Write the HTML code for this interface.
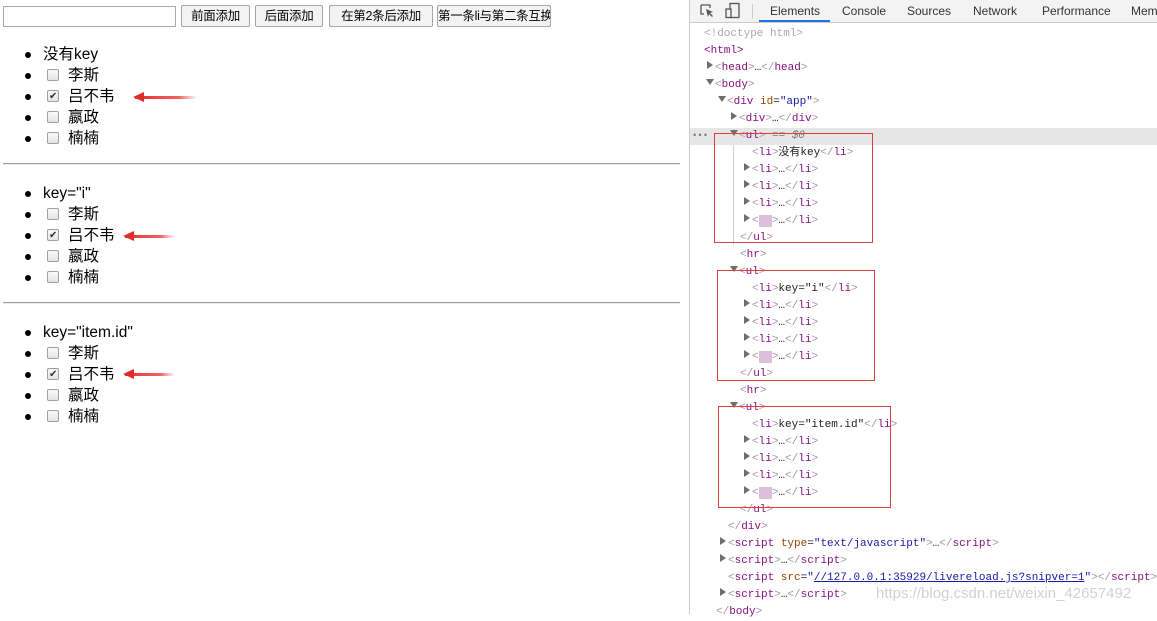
<!DOCTYPE html>
<html><head><meta charset="utf-8"><style>
*{margin:0;padding:0;box-sizing:border-box}
body{width:1157px;height:614px;overflow:hidden;background:#fff;position:relative;font-family:"Liberation Sans","Noto Sans CJK SC",sans-serif;color:#000}
.a{position:absolute}
.inp{left:3px;top:6px;width:173px;height:21px;border:1px solid #a9a9a9;background:#fff}
.btn{top:5px;height:22px;border:1px solid #a6a6a6;background:#f3f3f3;font-size:12.5px;line-height:20px;text-align:center;border-radius:2px;white-space:nowrap;overflow:hidden;letter-spacing:-0.3px}
.li{left:0;height:21px;font-size:15.5px;line-height:21px;white-space:nowrap}
.li .b{position:absolute;left:25px;top:8px;width:6px;height:6px;border-radius:50%;background:#000}
.li .t{position:absolute;left:43px;top:0}
.li .c{position:absolute;left:47px;top:4px;width:12px;height:12px;border:1px solid #a0a0a0;border-radius:2px;background:linear-gradient(#fafafa,#e4e4e4)}
.li .c.k::after{content:"✔";position:absolute;left:1px;top:-5px;font-size:10px;color:#333}
.li .t2{position:absolute;left:68px;top:0}
.hr{left:3px;width:677px;height:2px;border-top:1px solid #9a9a9a;border-bottom:1px solid #eee}
.arr{height:3px;background:linear-gradient(90deg,#e83030,#f06060 70%,rgba(240,100,100,0));}
.arr::before{content:"";position:absolute;left:-2px;top:-4px;border-right:11px solid #e52a2a;border-top:5.5px solid transparent;border-bottom:5.5px solid transparent}
.dt{left:689px;top:0;width:468px;height:614px;border-left:1px solid #ccc;background:#fff}
.tb{left:689px;top:0;width:468px;height:23px;background:#f3f3f3;border-bottom:1px solid #ccc;border-left:1px solid #ccc}
.tab{top:0;font-size:12px;line-height:22px;color:#333}
.ln{height:17px;line-height:17px;font-family:"Liberation Mono","DejaVu Sans Mono",monospace;font-size:11px;white-space:nowrap;color:#222;margin-top:1px}
.g{color:#a894a6}.p{color:#881280}.o{color:#994500}.v{color:#1a1aa6}.gr{color:#aaa}
.tri{position:absolute;width:0;height:0;margin-top:-3px}
.tr{border-left:6px solid #6e6e6e;border-top:4px solid transparent;border-bottom:4px solid transparent}
.td{border-top:6px solid #6e6e6e;border-left:4px solid transparent;border-right:4px solid transparent}
.box{border:1px solid #e23c3c}
.hl{background:#ddbfdd;color:#ddbfdd}
</style></head><body>
<div class="a inp"></div>
<div class="a btn" style="left:181px;width:69px">前面添加</div>
<div class="a btn" style="left:255px;width:68px">后面添加</div>
<div class="a btn" style="left:329px;width:104px">在第2条后添加</div>
<div class="a btn" style="left:437px;width:114px">第一条li与第二条互换</div>

<div class="a li" style="top:44px"><span class="b"></span><span class="t">没有key</span></div>
<div class="a li" style="top:65px"><span class="b"></span><span class="c"></span><span class="t2">李斯</span></div>
<div class="a li" style="top:86px"><span class="b"></span><span class="c k"></span><span class="t2">吕不韦</span></div>
<div class="a li" style="top:107px"><span class="b"></span><span class="c"></span><span class="t2">嬴政</span></div>
<div class="a li" style="top:128px"><span class="b"></span><span class="c"></span><span class="t2">楠楠</span></div>
<div class="a hr" style="top:163px"></div>
<div class="a li" style="top:183px"><span class="b"></span><span class="t">key="i"</span></div>
<div class="a li" style="top:204px"><span class="b"></span><span class="c"></span><span class="t2">李斯</span></div>
<div class="a li" style="top:225px"><span class="b"></span><span class="c k"></span><span class="t2">吕不韦</span></div>
<div class="a li" style="top:246px"><span class="b"></span><span class="c"></span><span class="t2">嬴政</span></div>
<div class="a li" style="top:267px"><span class="b"></span><span class="c"></span><span class="t2">楠楠</span></div>
<div class="a hr" style="top:302px"></div>
<div class="a li" style="top:322px"><span class="b"></span><span class="t">key="item.id"</span></div>
<div class="a li" style="top:343px"><span class="b"></span><span class="c"></span><span class="t2">李斯</span></div>
<div class="a li" style="top:364px"><span class="b"></span><span class="c k"></span><span class="t2">吕不韦</span></div>
<div class="a li" style="top:385px"><span class="b"></span><span class="c"></span><span class="t2">嬴政</span></div>
<div class="a li" style="top:406px"><span class="b"></span><span class="c"></span><span class="t2">楠楠</span></div>
<div class="a arr" style="left:135px;top:96px;width:62px"></div>
<div class="a arr" style="left:125px;top:235px;width:50px"></div>
<div class="a arr" style="left:125px;top:373px;width:50px"></div>

<div class="a dt"></div>
<div class="a tb"></div>
<svg class="a" style="left:699px;top:3px" width="16" height="16" viewBox="0 0 16 16"><path d="M2 2h9v3M2 2v9h3" fill="none" stroke="#555" stroke-width="1.3"/><path d="M7 6l7 3-3 1 3 3-1 1-3-3-1 3z" fill="#555"/></svg>
<svg class="a" style="left:724px;top:2px" width="18" height="18" viewBox="0 0 18 18"><rect x="6" y="1.5" width="9" height="14" fill="none" stroke="#555" stroke-width="1.3"/><rect x="2" y="7" width="5" height="8.5" fill="#f3f3f3" stroke="#555" stroke-width="1.3"/></svg>
<div class="a" style="left:752px;top:4px;width:1px;height:15px;background:#ccc"></div>
<div class="a tab" style="left:770px;color:#333">Elements</div>
<div class="a" style="left:759px;top:20px;width:71px;height:2px;background:#1a73e8"></div>
<div class="a tab" style="left:842px">Console</div>
<div class="a tab" style="left:907px">Sources</div>
<div class="a tab" style="left:973px">Network</div>
<div class="a tab" style="left:1042px">Performance</div>
<div class="a tab" style="left:1131px">Mem</div>

<div class="a" style="left:690px;top:128px;width:467px;height:17px;background:#e6e6e6"></div>
<div class="a ln" style="left:692px;top:127px;color:#777;font-size:9px">•••</div>
<div class="a" style="left:733px;top:145px;width:1px;height:100px;background:#c8d0e0"></div>

<div class="a ln gr" style="left:704px;top:25px">&lt;!doctype html&gt;</div>
<div class="a ln" style="left:704px;top:42px"><span class="p">&lt;html&gt;</span></div>
<div class="a tri tr" style="left:707px;top:64px"></div><div class="a ln" style="left:715px;top:59px"><span class="g">&lt;</span><span class="p">head</span><span class="g">&gt;</span>…<span class="g">&lt;/</span><span class="p">head</span><span class="g">&gt;</span></div>
<div class="a tri td" style="left:706px;top:82px"></div><div class="a ln" style="left:715px;top:76px"><span class="g">&lt;</span><span class="p">body</span><span class="g">&gt;</span></div>
<div class="a tri td" style="left:718px;top:99px"></div><div class="a ln" style="left:727px;top:93px"><span class="g">&lt;</span><span class="p">div </span><span class="o">id</span>=<span class="v">"app"</span><span class="g">&gt;</span></div>
<div class="a tri tr" style="left:731px;top:115px"></div><div class="a ln" style="left:739px;top:110px"><span class="g">&lt;</span><span class="p">div</span><span class="g">&gt;</span>…<span class="g">&lt;/</span><span class="p">div</span><span class="g">&gt;</span></div>
<div class="a tri td" style="left:730px;top:133px"></div><div class="a ln" style="left:739px;top:127px"><span class="g">&lt;</span><span class="p">ul</span><span class="g">&gt;</span> <span style="color:#777;font-style:italic">== $0</span></div>
<div class="a ln" style="left:752px;top:144px"><span class="g">&lt;</span><span class="p">li</span><span class="g">&gt;</span>没有key<span class="g">&lt;/</span><span class="p">li</span><span class="g">&gt;</span></div>
<div class="a tri tr" style="left:744px;top:166px"></div><div class="a ln" style="left:752px;top:161px"><span class="g">&lt;</span><span class="p">li</span><span class="g">&gt;</span>…<span class="g">&lt;/</span><span class="p">li</span><span class="g">&gt;</span></div>
<div class="a tri tr" style="left:744px;top:183px"></div><div class="a ln" style="left:752px;top:178px"><span class="g">&lt;</span><span class="p">li</span><span class="g">&gt;</span>…<span class="g">&lt;/</span><span class="p">li</span><span class="g">&gt;</span></div>
<div class="a tri tr" style="left:744px;top:200px"></div><div class="a ln" style="left:752px;top:195px"><span class="g">&lt;</span><span class="p">li</span><span class="g">&gt;</span>…<span class="g">&lt;/</span><span class="p">li</span><span class="g">&gt;</span></div>
<div class="a tri tr" style="left:744px;top:217px"></div><div class="a ln" style="left:752px;top:212px"><span class="g">&lt;</span><span class="hl">li</span><span class="g">&gt;</span>…<span class="g">&lt;/</span><span class="p">li</span><span class="g">&gt;</span></div>
<div class="a ln" style="left:740px;top:229px"><span class="g">&lt;/</span><span class="p">ul</span><span class="g">&gt;</span></div>
<div class="a ln" style="left:740px;top:246px"><span class="g">&lt;</span><span class="p">hr</span><span class="g">&gt;</span></div>
<div class="a tri td" style="left:730px;top:269px"></div><div class="a ln" style="left:739px;top:263px"><span class="g">&lt;</span><span class="p">ul</span><span class="g">&gt;</span></div>
<div class="a ln" style="left:752px;top:280px"><span class="g">&lt;</span><span class="p">li</span><span class="g">&gt;</span>key="i"<span class="g">&lt;/</span><span class="p">li</span><span class="g">&gt;</span></div>
<div class="a tri tr" style="left:744px;top:302px"></div><div class="a ln" style="left:752px;top:297px"><span class="g">&lt;</span><span class="p">li</span><span class="g">&gt;</span>…<span class="g">&lt;/</span><span class="p">li</span><span class="g">&gt;</span></div>
<div class="a tri tr" style="left:744px;top:319px"></div><div class="a ln" style="left:752px;top:314px"><span class="g">&lt;</span><span class="p">li</span><span class="g">&gt;</span>…<span class="g">&lt;/</span><span class="p">li</span><span class="g">&gt;</span></div>
<div class="a tri tr" style="left:744px;top:336px"></div><div class="a ln" style="left:752px;top:331px"><span class="g">&lt;</span><span class="p">li</span><span class="g">&gt;</span>…<span class="g">&lt;/</span><span class="p">li</span><span class="g">&gt;</span></div>
<div class="a tri tr" style="left:744px;top:353px"></div><div class="a ln" style="left:752px;top:348px"><span class="g">&lt;</span><span class="hl">li</span><span class="g">&gt;</span>…<span class="g">&lt;/</span><span class="p">li</span><span class="g">&gt;</span></div>
<div class="a ln" style="left:740px;top:365px"><span class="g">&lt;/</span><span class="p">ul</span><span class="g">&gt;</span></div>
<div class="a ln" style="left:740px;top:382px"><span class="g">&lt;</span><span class="p">hr</span><span class="g">&gt;</span></div>
<div class="a tri td" style="left:730px;top:405px"></div><div class="a ln" style="left:739px;top:399px"><span class="g">&lt;</span><span class="p">ul</span><span class="g">&gt;</span></div>
<div class="a ln" style="left:752px;top:416px"><span class="g">&lt;</span><span class="p">li</span><span class="g">&gt;</span>key="item.id"<span class="g">&lt;/</span><span class="p">li</span><span class="g">&gt;</span></div>
<div class="a tri tr" style="left:744px;top:438px"></div><div class="a ln" style="left:752px;top:433px"><span class="g">&lt;</span><span class="p">li</span><span class="g">&gt;</span>…<span class="g">&lt;/</span><span class="p">li</span><span class="g">&gt;</span></div>
<div class="a tri tr" style="left:744px;top:455px"></div><div class="a ln" style="left:752px;top:450px"><span class="g">&lt;</span><span class="p">li</span><span class="g">&gt;</span>…<span class="g">&lt;/</span><span class="p">li</span><span class="g">&gt;</span></div>
<div class="a tri tr" style="left:744px;top:472px"></div><div class="a ln" style="left:752px;top:467px"><span class="g">&lt;</span><span class="p">li</span><span class="g">&gt;</span>…<span class="g">&lt;/</span><span class="p">li</span><span class="g">&gt;</span></div>
<div class="a tri tr" style="left:744px;top:489px"></div><div class="a ln" style="left:752px;top:484px"><span class="g">&lt;</span><span class="hl">li</span><span class="g">&gt;</span>…<span class="g">&lt;/</span><span class="p">li</span><span class="g">&gt;</span></div>
<div class="a ln" style="left:740px;top:501px"><span class="g">&lt;/</span><span class="p">ul</span><span class="g">&gt;</span></div>
<div class="a ln" style="left:728px;top:518px"><span class="g">&lt;/</span><span class="p">div</span><span class="g">&gt;</span></div>
<div class="a tri tr" style="left:720px;top:540px"></div><div class="a ln" style="left:728px;top:535px"><span class="g">&lt;</span><span class="p">script </span><span class="o">type</span>=<span class="v">"text/javascript"</span><span class="g">&gt;</span>…<span class="g">&lt;/</span><span class="p">script</span><span class="g">&gt;</span></div>
<div class="a tri tr" style="left:720px;top:557px"></div><div class="a ln" style="left:728px;top:552px"><span class="g">&lt;</span><span class="p">script</span><span class="g">&gt;</span>…<span class="g">&lt;/</span><span class="p">script</span><span class="g">&gt;</span></div>
<div class="a ln" style="left:728px;top:569px"><span class="g">&lt;</span><span class="p">script </span><span class="o">src</span>=<span class="v">"<u>//127.0.0.1:35929/livereload.js?snipver=1</u>"</span><span class="g">&gt;&lt;/</span><span class="p">script</span><span class="g">&gt;</span></div>
<div class="a tri tr" style="left:720px;top:591px"></div><div class="a ln" style="left:728px;top:586px"><span class="g">&lt;</span><span class="p">script</span><span class="g">&gt;</span>…<span class="g">&lt;/</span><span class="p">script</span><span class="g">&gt;</span></div>
<div class="a ln" style="left:716px;top:603px"><span class="g">&lt;/</span><span class="p">body</span><span class="g">&gt;</span></div>
<div class="a" style="left:876px;top:585px;font-size:15px;color:rgba(190,190,190,0.7)">https://blog.csdn.net/weixin_42657492</div>

<div class="a box" style="left:714px;top:133px;width:159px;height:110px"></div>
<div class="a box" style="left:717px;top:270px;width:158px;height:111px"></div>
<div class="a box" style="left:718px;top:406px;width:173px;height:102px"></div>
</body></html>
